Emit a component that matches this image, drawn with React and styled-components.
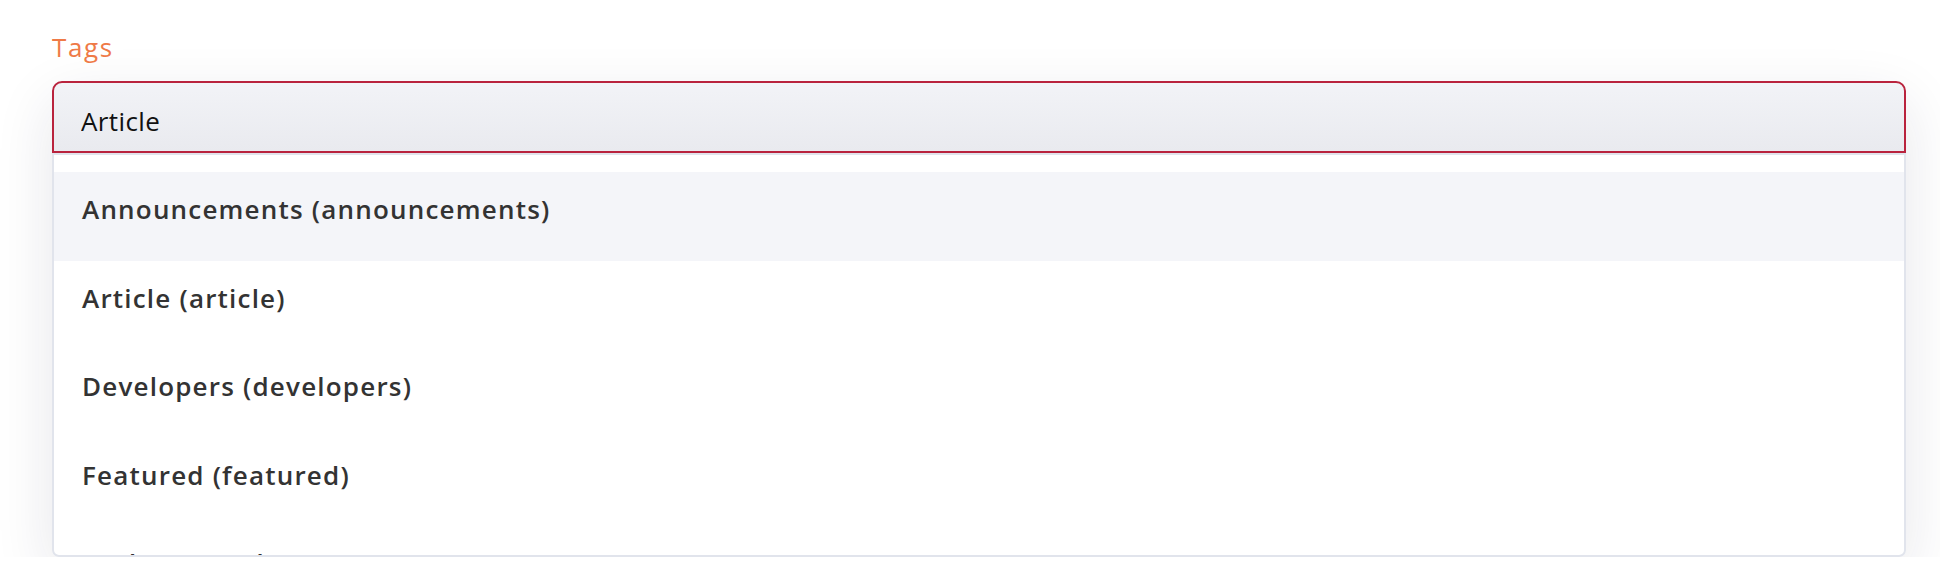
import React from "react";
import styled, { createGlobalStyle } from "styled-components";

const GlobalStyle = createGlobalStyle`
  html, body {
    margin: 0;
    background: #ffffff;
  }

  body {
    font-family: "Open Sans", "Liberation Sans", sans-serif;
  }
`;

const Page = styled.div`
  padding: 27px 34px 0 52px;
`;

const Label = styled.label`
  display: block;
  font-size: 26px;
  line-height: 40px;
  font-weight: 400;
  letter-spacing: 1.6px;
  color: #ef7a47;
  margin-bottom: 14px;
`;

const Combo = styled.div`
  border-radius: 10px 10px 7px 7px;
  box-shadow: 0 20px 60px rgba(30, 30, 60, 0.11);
`;

const Input = styled.input`
  display: block;
  width: 100%;
  height: 72px;
  box-sizing: border-box;
  margin: 0;
  padding: 8px 27px 0;
  border: 2px solid #b9233d;
  border-radius: 10px 10px 0 0;
  background: linear-gradient(180deg, #f2f3f7 0%, #e9eaef 100%);
  font-family: inherit;
  font-size: 26px;
  letter-spacing: 0.4px;
  color: #111111;
  outline: none;
`;

const List = styled.ul`
  list-style: none;
  margin: 0;
  padding: 17px 0 0;
  box-sizing: border-box;
  height: 404px;
  overflow: hidden;
  background: #ffffff;
  border: 2px solid #e1e4ec;
  border-radius: 0 0 7px 7px;
`;

const Option = styled.li`
  height: 88.6px;
  box-sizing: border-box;
  padding: 19px 28px 0;
  font-size: 26px;
  line-height: 36px;
  font-weight: 600;
  letter-spacing: 1.2px;
  color: #333333;
  background: ${(p) => (p.$active ? "#f4f5f9" : "transparent")};
  white-space: nowrap;
`;

const tags = [
  { name: "Announcements", slug: "announcements" },
  { name: "Article", slug: "article" },
  { name: "Developers", slug: "developers" },
  { name: "Featured", slug: "featured" },
  { name: "Updates", slug: "updates" },
];

export default function App() {
  return (
    <>
      <GlobalStyle />
      <Page>
        <Label htmlFor="tags">Tags</Label>
        <Combo>
          <Input id="tags" readOnly value="Article" />
          <List role="listbox">
            {tags.map((t, i) => (
              <Option key={t.slug} role="option" $active={i === 0}>
                {t.name} ({t.slug})
              </Option>
            ))}
          </List>
        </Combo>
      </Page>
    </>
  );
}
